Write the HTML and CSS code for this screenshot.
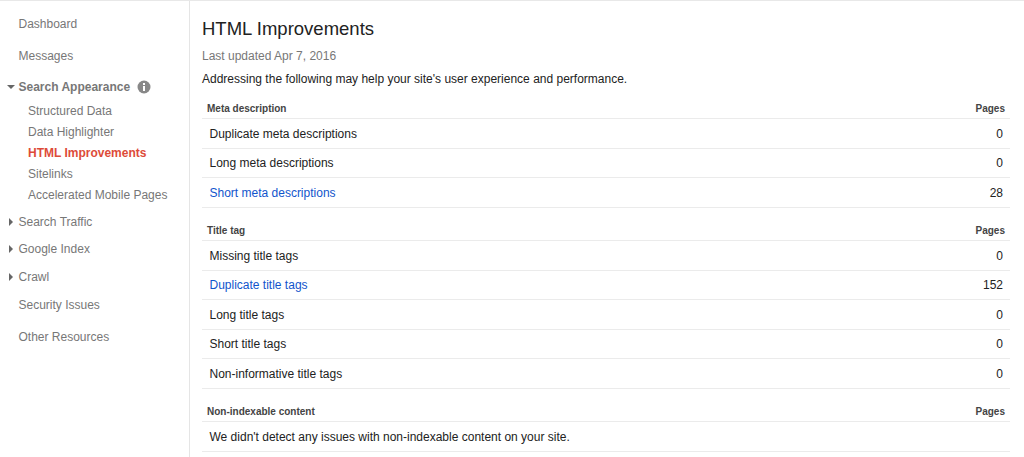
FILE: index.html
```html
<!DOCTYPE html>
<html lang="en">
<head>
<meta charset="utf-8">
<title>HTML Improvements</title>
<link rel="stylesheet" href="styles.css">
</head>
<body>
<div class="app">
  <nav class="side">
    <a class="nav-item first">Dashboard</a>
    <a class="nav-item">Messages</a>
    <div class="group-head open">
      <svg class="caret" width="8" height="8" viewBox="0 0 8 8"><path d="M0 2h8L4 6z"/></svg>
      <span class="group-title">Search Appearance</span>
      <svg class="info" width="14" height="14" viewBox="0 0 14 14"><circle cx="7" cy="7" r="6.5"/><rect x="6" y="6" width="2" height="5" class="glyph"/><rect x="6" y="3" width="2" height="2" class="glyph"/></svg>
    </div>
    <ul class="sub">
      <li>Structured Data</li>
      <li>Data Highlighter</li>
      <li class="active">HTML Improvements</li>
      <li>Sitelinks</li>
      <li>Accelerated Mobile Pages</li>
    </ul>
    <div class="group-head closed first-closed">
      <svg class="caret" width="8" height="8" viewBox="0 0 8 8"><path d="M2 0v8l4-4z"/></svg>
      <span>Search Traffic</span>
    </div>
    <div class="group-head closed">
      <svg class="caret" width="8" height="8" viewBox="0 0 8 8"><path d="M2 0v8l4-4z"/></svg>
      <span>Google Index</span>
    </div>
    <div class="group-head closed">
      <svg class="caret" width="8" height="8" viewBox="0 0 8 8"><path d="M2 0v8l4-4z"/></svg>
      <span>Crawl</span>
    </div>
    <a class="nav-item security">Security Issues</a>
    <a class="nav-item">Other Resources</a>
  </nav>
  <main class="main">
    <h1 class="title">HTML Improvements</h1>
    <p class="updated">Last updated Apr 7, 2016</p>
    <p class="intro">Addressing the following may help your site's user experience and performance.</p>

    <section class="block">
      <div class="head"><span>Meta description</span><span>Pages</span></div>
      <div class="row"><span>Duplicate meta descriptions</span><span class="num">0</span></div>
      <div class="row"><span>Long meta descriptions</span><span class="num">0</span></div>
      <div class="row"><a class="link">Short meta descriptions</a><span class="num">28</span></div>
    </section>

    <section class="block">
      <div class="head"><span>Title tag</span><span>Pages</span></div>
      <div class="row"><span>Missing title tags</span><span class="num">0</span></div>
      <div class="row"><a class="link">Duplicate title tags</a><span class="num">152</span></div>
      <div class="row"><span>Long title tags</span><span class="num">0</span></div>
      <div class="row"><span>Short title tags</span><span class="num">0</span></div>
      <div class="row"><span>Non-informative title tags</span><span class="num">0</span></div>
    </section>

    <section class="block">
      <div class="head"><span>Non-indexable content</span><span>Pages</span></div>
      <div class="row"><span>We didn't detect any issues with non-indexable content on your site.</span></div>
    </section>
  </main>
</div>
</body>
</html>
```
FILE: styles.css
```css
* { box-sizing: border-box; }
html, body { margin: 0; height: 457px; overflow: hidden; background: #fff; }
body { font-family: "Liberation Sans", Arial, sans-serif; color: #222; }
.app { display: flex; height: 457px; border-top: 1px solid #e8e8e8; }
.side { width: 190px; flex: none; border-right: 1px solid #e5e5e5; font-size: 12px; color: #777; }
.nav-item { display: block; padding-left: 18.5px; line-height: 16px; height: 16px; margin-bottom: 15.5px; }
.nav-item.first { margin-top: 15px; }
.nav-item.security { margin-top: 12.5px; }
.group-head { display: flex; align-items: center; height: 16px; line-height: 16px; padding-left: 6.5px; }
.group-head .caret { fill: #666; flex: none; margin-right: 4px; }
.group-head.closed { margin-bottom: 11.5px; }
.group-head.first-closed { margin-top: 5.5px; }
.group-title { font-weight: 700; color: #777; }
.info { margin-left: 7px; fill: #888; }
.info .glyph { fill: #fff; }
.sub { list-style: none; margin: 7.5px 0 0; padding: 0 0 0 28px; }
.sub li { height: 21.2px; line-height: 16px; }
.sub .active { color: #dd4b39; font-weight: 700; }
.main { flex: 1; padding: 0 14px 0 12px; min-width: 0; }
.title { margin: 17px 0 0; font-size: 18.5px; line-height: 21px; font-weight: 400; color: #222; }
.updated { margin: 9px 0 0; font-size: 12px; line-height: 16px; color: #777; }
.intro { margin: 7px 0 0; font-size: 12px; line-height: 16px; color: #222; }
.block { margin-top: 11px; }
.block + .block { margin-top: 12.5px; }
.head { display: flex; justify-content: space-between; align-items: flex-start; height: 21px; padding: 4px 5px 0; line-height: 13px; font-size: 10px; font-weight: 700; color: #444; border-bottom: 1px solid #ebebeb; }
.row { display: flex; justify-content: space-between; align-items: center; height: 29.5px; padding: 1px 7px 0 7.5px; font-size: 12px; color: #222; border-bottom: 1px solid #ebebeb; }
.link { color: #1155cc; }
.num { text-align: right; }
```
